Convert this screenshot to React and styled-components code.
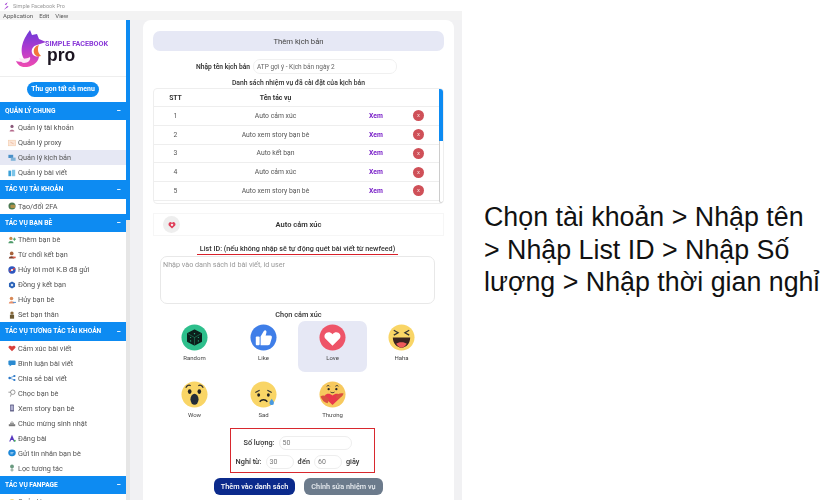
import React from 'react';
import styled, {createGlobalStyle} from 'styled-components';

const GlobalStyle = createGlobalStyle`
  html, body {
    margin: 0;
    height: 500px;
    overflow: hidden;
    background: #fff;
    font-family: Roboto, "Liberation Sans", sans-serif;
  }
  * { box-sizing: border-box; }
`;

// sidebar icons, drawn on a 10x10 box
const sideIcons = {
    account: <><circle cx="5" cy="3" r="2" fill="#8a5a7a"/><path d="M2 9.500c0-3 6-3 6 0z" fill="#b56a8c"/></>,
    proxy: <><rect x=".5" y="1.500" width="9" height="7" fill="#fbe6d8" stroke="#f3c9a8" strokeWidth=".7"/><path d="M3 4l4 2" stroke="#e8a080" strokeWidth=".7"/></>,
    script: <><rect x=".5" y="1" width="6" height="4" fill="#4a90c8"/><rect x="3.500" y="4.500" width="6" height="4" fill="#7fb2d8"/></>,
    post: <><rect x=".5" y="2" width="3.500" height="7" fill="#3aa0d8"/><rect x="5" y="1" width="4" height="8" fill="#7cc4e8"/></>,
    fa: <><circle cx="5" cy="5" r="4.400" fill="#4d7a52"/><rect x="3" y="3.500" width="6" height="4" rx="1" fill="#b09048"/></>,
    add: <><circle cx="3.600" cy="3" r="2" fill="#c98a4a"/><path d="M.5 9c0-3.600 6.400-3.600 6.400 0z" fill="#4e9a6a"/><path d="M8 2v4M6 4h4" stroke="#3f9a58" strokeWidth="1.100"/></>,
    reject: <><circle cx="4.600" cy="3" r="2.300" fill="#a8623c"/><path d="M1 9.500c0-4 7-4 7 0z" fill="#7c3f2c"/><rect x="6" y="7" width="3.600" height="2" fill="#d85a4a"/></>,
    cancel: <><circle cx="5" cy="5" r="4.600" fill="#2d56c0"/><path d="M2 6.400L8.600 3" stroke="#e2453c" strokeWidth="1.800"/><circle cx="5" cy="5" r="1.400" fill="#fff"/></>,
    agree: <><path d="M5 .5l3.800 2.200v4.600L5 9.500 1.200 7.300V2.700z" fill="#2a62b8"/><circle cx="5" cy="5" r="1.600" fill="#cfe0f5"/></>,
    unfriend: <><circle cx="4.400" cy="3" r="2.200" fill="#d88a58"/><path d="M1 9.500c0-4 7-4 7 0z" fill="#e8906a"/><path d="M6 8h4" stroke="#4a8ad0" strokeWidth="1.200"/></>,
    best: <><circle cx="5" cy="2.600" r="2.100" fill="#8a6a3c"/><rect x="2.400" y="4.600" width="5.200" height="5" fill="#6c5a34"/></>,
    react: <path d="M5 9L1 5c-1.400-2 1.600-4 4-1.800C7.400 1 10.400 3 9 5z" fill="#d8403c"/>,
    comment: <><rect x=".5" y="2" width="9" height="5.500" rx="1" fill="#2a8ad0"/><path d="M2 7.500v2l2.500-2z" fill="#2a8ad0"/></>,
    share: <><circle cx="2" cy="5" r="1.500" fill="#2a78c8"/><circle cx="8" cy="2.500" r="1.400" fill="#2a78c8"/><circle cx="8" cy="7.500" r="1.400" fill="#2a78c8"/><path d="M2 5l6-2.500M2 5l6 2.500" stroke="#2a78c8" strokeWidth=".8"/></>,
    poke: <><circle cx="6" cy="4" r="2.800" fill="none" stroke="#666" strokeWidth=".8"/><path d="M.5 4h3M4 6.500L3 9.500" stroke="#666" strokeWidth=".8"/></>,
    story: <><rect x="2.500" y=".5" width="5" height="9" rx=".8" fill="#6a6a90"/><rect x="3.300" y="2" width="3.400" height="5.500" fill="#b0b0d0"/></>,
    birthday: <><path d="M1 9V6.500h8V9z" fill="#777"/><path d="M2.500 6.500V4.500h5v2" fill="#999"/><path d="M5 2.500v2" stroke="#777" strokeWidth=".8"/></>,
    write: <><path d="M1.500 9.500L5 .8l3.500 8.700H7L6.300 7.500H3.700L3 9.500z" fill="#5a3ac0"/><circle cx="8.500" cy="8.500" r="1.200" fill="#3fae5a"/></>,
    message: <><ellipse cx="5" cy="4.800" rx="4.700" ry="4.200" fill="#1e88d8"/><path d="M3 4.500h4M3 6h3" stroke="#fff" strokeWidth=".7"/></>,
    filter: <><circle cx="5" cy="3" r="2.400" fill="#6a9a80"/><path d="M5 5v4.500M3 7.500h4" stroke="#6a8a78" strokeWidth=".9"/></>,
    page: <circle cx="5" cy="5" r="3.500" fill="#f2c84b"/>,
};

const menuGroups = [
    {title: 'QUẢN LÝ CHUNG', items: [
        {icon: 'account', label: 'Quản lý tài khoản'},
        {icon: 'proxy', label: 'Quản lý proxy'},
        {icon: 'script', label: 'Quản lý kịch bản', active: true},
        {icon: 'post', label: 'Quản lý bài viết'},
    ]},
    {title: 'TÁC VỤ TÀI KHOẢN', items: [{icon: 'fa', label: 'Tạo/đổi 2FA'}]},
    {title: 'TÁC VỤ BẠN BÈ', items: [
        {icon: 'add', label: 'Thêm bạn bè'},
        {icon: 'reject', label: 'Từ chối kết bạn'},
        {icon: 'cancel', label: 'Hủy lời mời K.B đã gửi'},
        {icon: 'agree', label: 'Đồng ý kết bạn'},
        {icon: 'unfriend', label: 'Hủy bạn bè'},
        {icon: 'best', label: 'Set bạn thân'},
    ]},
    {title: 'TÁC VỤ TƯƠNG TÁC TÀI KHOẢN', items: [
        {icon: 'react', label: 'Cảm xúc bài viết'},
        {icon: 'comment', label: 'Bình luận bài viết'},
        {icon: 'share', label: 'Chia sẻ bài viết'},
        {icon: 'poke', label: 'Chọc bạn bè'},
        {icon: 'story', label: 'Xem story bạn bè'},
        {icon: 'birthday', label: 'Chúc mừng sinh nhật'},
        {icon: 'write', label: 'Đăng bài'},
        {icon: 'message', label: 'Gửi tin nhắn bạn bè'},
        {icon: 'filter', label: 'Lọc tương tác'},
    ]},
    {title: 'TÁC VỤ FANPAGE', items: [{icon: 'page', label: 'Quản lý'}]},
];

const tasks = ['Auto cảm xúc', 'Auto xem story bạn bè', 'Auto kết bạn', 'Auto cảm xúc', 'Auto xem story bạn bè'];

const Face = ({children, color = '#f9d566'}) => (
    <svg width="27" height="27" viewBox="0 0 28 28">
        <circle cx="14" cy="14" r="13.5" fill={color}/>
        {children}
    </svg>
);

const reactions = [
    {label: 'Random', face: (
        <Face color="#2ebf8c">
            <path d="M14 6.500l7 3.500v8l-7 3.500-7-3.500v-8z" fill="#0c1f1b" stroke="#0c1f1b" strokeWidth="1.500" strokeLinejoin="round"/>
            <path d="M14 14v7.500M7 10l7 4 7-4" stroke="#2ebf8c" strokeWidth=".4" fill="none"/>
            <circle cx="14" cy="10" r=".7" fill="#2ebf8c"/>
            <circle cx="10" cy="14" r=".6" fill="#2ebf8c"/>
            <circle cx="10" cy="17.500" r=".6" fill="#2ebf8c"/>
            <circle cx="18" cy="14" r=".6" fill="#2ebf8c"/>
            <circle cx="18" cy="17.500" r=".6" fill="#2ebf8c"/>
        </Face>
    )},
    {label: 'Like', face: (
        <Face color="#3f7ee8">
            <rect x="6" y="13" width="4" height="9" rx="1" fill="#fff"/>
            <path d="M11 13l3.500-6c1.500-1.500 3 0 2.500 2l-.8 3H21c1.500 0 2 1.300 1.600 2.500l-1.800 6c-.3 1-1 1.500-2 1.500H11z" fill="#fff"/>
        </Face>
    )},
    {label: 'Love', active: true, face: (
        <Face color="#ee5468">
            <path d="M14 22.500L6.500 15C3.500 11 9.500 5.500 14 10.500 18.500 5.500 24.500 11 21.500 15z" fill="#fff"/>
        </Face>
    )},
    {label: 'Haha', face: (
        <Face>
            <path d="M6 6.500l4.500 2.500-4.500 2.500M22 6.500l-4.500 2.500 4.500 2.500" stroke="#333" strokeWidth="1.300" fill="none"/>
            <path d="M5 14h18c0 6-4 10.500-9 10.500S5 20 5 14z" fill="#3a2420"/>
            <path d="M8.500 20.500c2-2.200 9-2.200 11 0-1.500 2.500-3.300 4-5.500 4s-4-1.500-5.500-4z" fill="#ef5a5a"/>
        </Face>
    )},
    {label: 'Wow', face: (
        <Face>
            <path d="M5 7c1-2.500 3.500-3.500 5-2M23 7c-1-2.500-3.500-3.500-5-2" stroke="#333" strokeWidth="1.300" fill="none"/>
            <ellipse cx="9" cy="11" rx="1.900" ry="2.400" fill="#222"/>
            <ellipse cx="19" cy="11" rx="1.900" ry="2.400" fill="#222"/>
            <ellipse cx="14" cy="19" rx="4.200" ry="5.700" fill="#232c38"/>
        </Face>
    )},
    {label: 'Sad', face: (
        <Face>
            <path d="M5.500 12l4.500-2.500M22.500 12L18 9.500" stroke="#333" strokeWidth="1.200" fill="none"/>
            <ellipse cx="9" cy="14.500" rx="1.500" ry="1.800" fill="#222"/>
            <ellipse cx="19" cy="14.500" rx="1.500" ry="1.800" fill="#222"/>
            <path d="M10 21.500c2-2.700 6-2.700 8 0" stroke="#222" strokeWidth="1.400" fill="none"/>
            <path d="M22.500 18.500c1.300 1.800 2.300 2.800 2.300 4.200a2.300 2.300 0 01-4.600 0c0-1.400 1-2.400 2.300-4.200z" fill="#4a9ae0"/>
        </Face>
    )},
    {label: 'Thương', face: (
        <Face color="#f7c95e">
            <path d="M8 5.500c1-1 2.500-1 3 0M17 5.500c1-1 2.500-1 3 0" stroke="#333" strokeWidth="1" fill="none"/>
            <circle cx="10" cy="8.500" r="1.200" fill="#222"/>
            <circle cx="18" cy="8.500" r="1.200" fill="#222"/>
            <path d="M12 11.500c1 .8 3 .8 4 0" stroke="#222" strokeWidth="1" fill="none"/>
            <path d="M14 25L6.500 18c-2.500-3.500 3-7 7.500-3 4.500-4 10-.5 7.500 3z" fill="#e9394a"/>
            <path d="M1.500 16c3-2 6.500-.5 9 3l-1.500 4c-3-.5-6-3-7.500-7z" fill="#d9503f"/>
            <path d="M25.500 13c-3-1-6 0-8.500 3l1.500 2.500c3-.5 6-2 7-5.500z" fill="#d9503f"/>
        </Face>
    )},
];

const App = () => (
    <Page>
        <GlobalStyle/>
        <AppWindow>
            <TitleBar>
                <svg width="6" height="8" viewBox="0 0 7 9"><path d="M5.500 0L2 2.500 5 4.500 1 9l5.500-3.500L3.500 3.500z" fill="#a03ad0"/></svg>
                Simple Facebook Pro
            </TitleBar>
            <MenuBar>
                <span>Application</span>
                <span>Edit</span>
                <span>View</span>
            </MenuBar>
            <Body>
                <Sidebar>
                    <SideContent>
                        <LogoArea>
                            <svg width="30" height="38" viewBox="0 0 30 38">
                                <defs>
                                    <linearGradient id="fox" x1="0.5" y1="0" x2="0.5" y2="1">
                                        <stop offset="0" stopColor="#6a3ad8"/>
                                        <stop offset=".5" stopColor="#b03ad0"/>
                                        <stop offset="1" stopColor="#f04ab0"/>
                                    </linearGradient>
                                </defs>
                                <path d="M14 0l2 5 5-1 2 5 7 3-9 3c-4 1-6 4-5 8 1 3 4 4 7 3 0 5-5 10-12 11-5 .5-9-1-11-6 3 1 7 1 9-1-3-3-4-8-3-14 1-5 4-11 8-16z" fill="url(#fox)"/>
                                <path d="M3 28c3 1 8 1 11-1 1 3-2 6-6 6-2 0-4-2-5-5z" fill="#fbe8f6"/>
                                <path d="M23 15c-4 1-6 4-5 8 1 3 4 4 7 3-2-2-3-4-3-6s0-3 1-5z" fill="#f4763a"/>
                            </svg>
                            <LogoText>
                                <LogoName>SIMPLE FACEBOOK</LogoName>
                                <LogoPro>pro</LogoPro>
                            </LogoText>
                        </LogoArea>
                        <CollapseRow>
                            <CollapseButton>Thu gọn tất cả menu</CollapseButton>
                        </CollapseRow>
                        {menuGroups.map(group => (
                            <div key={group.title}>
                                <GroupHeader>
                                    {group.title}
                                    <span>−</span>
                                </GroupHeader>
                                {group.items.map(item => (
                                    <MenuItem key={item.label} $active={item.active}>
                                        <svg width="8" height="8" viewBox="0 0 10 10">{sideIcons[item.icon]}</svg>
                                        {item.label}
                                    </MenuItem>
                                ))}
                            </div>
                        ))}
                    </SideContent>
                    <SideScroll><SideThumb/></SideScroll>
                </Sidebar>
                <Card>
                    <CardTitle>Thêm kịch bản</CardTitle>
                    <NameRow>
                        <NameLabel>Nhập tên kịch bản</NameLabel>
                        <NameInput>ATP gợi ý - Kịch bản ngày 2</NameInput>
                    </NameRow>
                    <ListTitle>Danh sách nhiệm vụ đã cài đặt của kịch bản</ListTitle>
                    <TableBox>
                        <TableBody>
                            <HeadRow>
                                <div>STT</div>
                                <CellName>Tên tác vụ</CellName>
                            </HeadRow>
                            {tasks.map((task, i) => (
                                <TaskRow key={i}>
                                    <div>{i + 1}</div>
                                    <CellName>{task}</CellName>
                                    <CellView>Xem</CellView>
                                    <CellDelete><DeleteButton>x</DeleteButton></CellDelete>
                                </TaskRow>
                            ))}
                        </TableBody>
                        <TableScroll><TableThumb/></TableScroll>
                    </TableBox>
                    <TaskBar>
                        <TaskIcon>
                            <svg width="8" height="8" viewBox="0 0 10 10">
                                <path d="M5 9.500L1 5.500C-.5 3 3 -.5 5 2.500 7 -.5 10.500 3 9 5.500z" fill="#e0405a"/>
                                <circle cx="5" cy="4.800" r="1.500" fill="#f2f2f2"/>
                            </svg>
                        </TaskIcon>
                        <TaskTitle>Auto cảm xúc</TaskTitle>
                    </TaskBar>
                    <ListIdLabel>List ID: (nếu không nhập sẽ tự động quét bài viết từ newfeed)</ListIdLabel>
                    <ListArea>Nhập vào danh sách id bài viết, id user</ListArea>
                    <ChooseTitle>Chọn cảm xúc</ChooseTitle>
                    <ReactionGrid>
                        {reactions.map(r => (
                            <Reaction key={r.label} $active={r.active}>
                                {r.face}
                                <span>{r.label}</span>
                            </Reaction>
                        ))}
                    </ReactionGrid>
                    <SettingBox>
                        <SettingRow>
                            <BoldLabel>Số lượng:</BoldLabel>
                            <SmallInput $width={73}>50</SmallInput>
                        </SettingRow>
                        <SettingRow>
                            <BoldLabel>Nghỉ từ:</BoldLabel>
                            <SmallInput $width={28}>30</SmallInput>
                            <BoldLabel>đến</BoldLabel>
                            <SmallInput $width={28}>60</SmallInput>
                            <BoldLabel>giây</BoldLabel>
                        </SettingRow>
                    </SettingBox>
                    <ButtonRow>
                        <ActionButton $width={81} $color="#0b2a8c" $text="#fff">Thêm vào danh sách</ActionButton>
                        <ActionButton $width={79} $color="#6c7b8c" $text="#e8ecf0">Chỉnh sửa nhiệm vụ</ActionButton>
                    </ButtonRow>
                </Card>
            </Body>
        </AppWindow>
        <Caption>
            Chọn tài khoản &gt; Nhập tên<br/>
            &gt; Nhập List ID &gt; Nhập Số<br/>
            lượng &gt; Nhập thời gian nghỉ
        </Caption>
    </Page>
);

const Page = styled.div`
  display: flex;
  width: 840px;
  height: 500px;
  overflow: hidden;
  background: #fff;
`
const AppWindow = styled.div`
  width: 462px;
  height: 500px;
  display: flex;
  flex-direction: column;
  flex-shrink: 0;
  filter: blur(0.3px);
`
const TitleBar = styled.div`
  height: 11px;
  display: flex;
  align-items: center;
  gap: 4px;
  padding-left: 3px;
  font-size: 5.5px;
  color: #999;
  background: #fff;
`
const MenuBar = styled.div`
  height: 9px;
  display: flex;
  align-items: center;
  gap: 6px;
  padding-left: 3px;
  font-size: 6px;
  color: #555;
  background: #f3f3f3;
`
const Body = styled.div`
  flex: 1;
  display: flex;
  min-height: 0;
  background: #f1f1f3;
`
const Sidebar = styled.div`
  width: 130px;
  display: flex;
  flex-shrink: 0;
  overflow: hidden;
`
const SideContent = styled.div`
  width: 126px;
  background: #fff;
`
const SideScroll = styled.div`
  width: 4px;
  background: #e6e6e6;
`
const SideThumb = styled.div`
  height: 200px;
  background: #0d8bf2;
`
const LogoArea = styled.div`
  height: 57px;
  display: flex;
  align-items: flex-start;
  padding: 10px 0 0 16px;
  border-bottom: 1px solid #eee;
`
const LogoText = styled.div`
  display: flex;
  flex-direction: column;
  margin: 10px 0 0 -1px;
`
const LogoName = styled.div`
  height: 8px;
  line-height: 8px;
  font-size: 7.2px;
  font-weight: 700;
  color: #8a3ad8;
  white-space: nowrap;
`
const LogoPro = styled.div`
  height: 12px;
  margin-top: 1px;
  padding-left: 2px;
  font-family: "Liberation Sans", sans-serif;
  font-size: 17.5px;
  line-height: 12px;
  font-weight: 700;
  color: #1b1420;
`
const CollapseRow = styled.div`
  height: 24.5px;
  display: flex;
  justify-content: center;
  align-items: center;
`
const CollapseButton = styled.div`
  width: 72px;
  height: 15px;
  border-radius: 8px;
  background: #0d8bf2;
  color: #fff;
  font-size: 6.9px;
  font-weight: 700;
  display: flex;
  align-items: center;
  justify-content: center;
  white-space: nowrap;
`
const GroupHeader = styled.div`
  height: 18.5px;
  display: flex;
  align-items: center;
  justify-content: space-between;
  padding: 0 5px;
  background: #0d8bf2;
  color: #fff;
  font-size: 6.6px;
  font-weight: 700;
  white-space: nowrap;

  span {
    font-size: 8px;
  }
`
const MenuItem = styled.div`
  height: 15px;
  display: flex;
  align-items: center;
  gap: 2px;
  padding-left: 8px;
  font-size: 7.3px;
  color: #555;
  white-space: nowrap;
  background: ${props => props.$active ? '#e6e8f4' : '#fff'};
`
const Card = styled.div`
  width: 311px;
  margin: 0 0 0 13px;
  padding: 11px 10px 0;
  background: #fff;
  border-radius: 8px 8px 0 0;
  overflow: hidden;
  display: flex;
  flex-direction: column;
  align-items: center;
`
const CardTitle = styled.div`
  width: 100%;
  height: 20px;
  flex-shrink: 0;
  border-radius: 7px;
  background: #e6e8f5;
  display: flex;
  align-items: center;
  justify-content: center;
  font-size: 7.7px;
  color: #444;
`
const NameRow = styled.div`
  display: flex;
  align-items: center;
  gap: 3px;
  margin: 8px 4px 0 0;
`
const BoldLabel = styled.span`
  font-size: 7.3px;
  font-weight: 500;
  color: #333;
  white-space: nowrap;
`
const NameLabel = styled(BoldLabel)`
  font-size: 6.7px;
  font-weight: 600;
`
const NameInput = styled.div`
  width: 144px;
  height: 15px;
  border: 1px solid #f0f0f0;
  border-radius: 7px;
  padding-left: 3px;
  display: flex;
  align-items: center;
  font-size: 6.5px;
  color: #666;
  white-space: nowrap;
`
const ListTitle = styled.div`
  margin-top: 5px;
  height: 9px;
  line-height: 9px;
  font-size: 6.8px;
  font-weight: 500;
  color: #333;
`
const TableBox = styled.div`
  width: 100%;
  height: 116px;
  flex-shrink: 0;
  display: flex;
  border: 1px solid #eee;
  border-radius: 4px;
  overflow: hidden;
`
const TableBody = styled.div`
  flex: 1;
`
const TableScroll = styled.div`
  width: 5px;
  background: #fff;
  border-left: 1px solid #ccc;
  border-right: 1px solid #ccc;
  border-bottom: 1px solid #ccc;
  border-radius: 0 0 3px 3px;
`
const TableThumb = styled.div`
  height: 52px;
  width: 5px;
  margin-left: -1px;
  background: #0d8bf2;
`
const HeadRow = styled.div`
  height: 18px;
  display: grid;
  grid-template-columns: 43px 157px 44px 41px;
  align-items: center;
  font-size: 6.8px;
  font-weight: 700;
  color: #333;
  text-align: center;
  border-bottom: 1px solid #eee;
`
const TaskRow = styled(HeadRow)`
  height: 18.75px;
  font-weight: 400;
  color: #555;
`
const CellName = styled.div`
  white-space: nowrap;
`
const CellView = styled.div`
  color: #7a22c8;
  font-weight: 700;
`
const CellDelete = styled.div`
  display: flex;
  justify-content: center;
`
const DeleteButton = styled.div`
  width: 11px;
  height: 11px;
  border-radius: 50%;
  background: #cf5058;
  color: #f5d5d5;
  font-size: 6px;
  line-height: 10px;
  text-align: center;
`
const TaskBar = styled.div`
  width: 100%;
  height: 23px;
  flex-shrink: 0;
  margin-top: 9px;
  display: flex;
  align-items: center;
  padding-left: 9px;
  border: 1px solid #f6f6f6;
`
const TaskIcon = styled.div`
  width: 17px;
  height: 17px;
  border-radius: 50%;
  background: #eee;
  display: flex;
  align-items: center;
  justify-content: center;
`
const TaskTitle = styled.div`
  flex: 1;
  padding-right: 26px;
  text-align: center;
  font-size: 7.5px;
  font-weight: 600;
  color: #333;
`
const ListIdLabel = styled.div`
  margin: 8px 2px 0 0;
  height: 10.5px;
  padding: 0 3px;
  line-height: 9px;
  font-size: 7.2px;
  font-weight: 500;
  color: #333;
  white-space: nowrap;
  border-bottom: 1.5px solid #d8202a;
`
const ListArea = styled.div`
  width: 275px;
  height: 48px;
  flex-shrink: 0;
  margin: 1px 2px 0 0;
  padding: 3px 2px;
  border: 1px solid #e8e8e8;
  border-radius: 7px;
  font-size: 7.2px;
  color: #999;
`
const ChooseTitle = styled.div`
  margin-top: 6px;
  height: 9px;
  line-height: 9px;
  font-size: 7.3px;
  font-weight: 500;
  color: #333;
`
const ReactionGrid = styled.div`
  display: grid;
  grid-template-columns: repeat(4, 69px);
  grid-auto-rows: 51px;
  row-gap: 6px;
  margin: 2px 1px 0 0;
  flex-shrink: 0;
`
const Reaction = styled.div`
  display: flex;
  flex-direction: column;
  align-items: center;
  padding-top: 3px;
  border-radius: 7px;
  font-size: 6px;
  color: #444;
  background: ${props => props.$active ? '#e6e8f5' : 'transparent'};

  span {
    margin-top: 3px;
  }
`
const SettingBox = styled.div`
  width: 145px;
  height: 45px;
  flex-shrink: 0;
  margin: -1px 0 0 7px;
  padding: 7px 9px 0 0;
  border: 1.5px solid #d8282e;
  display: flex;
  flex-direction: column;
  gap: 5px;
`
const SettingRow = styled.div`
  display: flex;
  align-items: center;
  justify-content: center;
  gap: 4px;
`
const SmallInput = styled.div`
  width: ${props => props.$width}px;
  height: 14px;
  border: 1px solid #eee;
  border-radius: 7px;
  padding-left: 3px;
  display: flex;
  align-items: center;
  font-size: 7px;
  color: #777;
`
const ButtonRow = styled.div`
  display: flex;
  gap: 9px;
  margin-top: 5px;
  flex-shrink: 0;
`
const ActionButton = styled.div`
  width: ${props => props.$width}px;
  height: 17px;
  border-radius: 6px;
  background: ${props => props.$color};
  color: ${props => props.$text};
  font-size: 7.3px;
  font-weight: 500;
  display: flex;
  align-items: center;
  justify-content: center;
  white-space: nowrap;
`
const Caption = styled.div`
  flex: 1;
  padding: 201px 0 0 22px;
  font-family: "Liberation Sans", sans-serif;
  font-size: 26.8px;
  line-height: 32.5px;
  color: #111;
  white-space: nowrap;
`

export default App;
